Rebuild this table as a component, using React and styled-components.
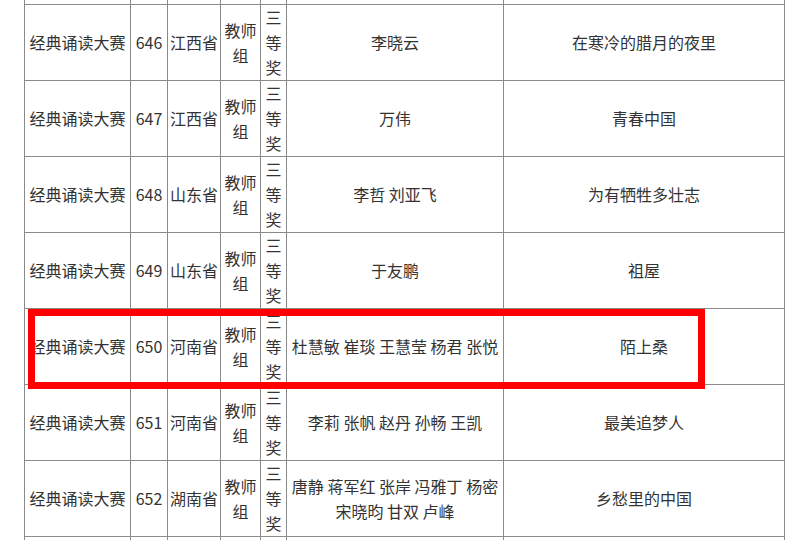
import React from 'react';
import styled, { createGlobalStyle } from 'styled-components';

const GlobalStyle = createGlobalStyle`
  html, body {
    margin: 0;
    padding: 0;
    overflow: hidden;
    background: #ffffff;
  }
`;

const Page = styled.div`
  position: relative;
  height: 540px;
  overflow: hidden;
  padding-left: 24px;
  font-family: "Noto Sans CJK SC", "Noto Sans", sans-serif;
  color: #333333;
`;

const Table = styled.table`
  table-layout: fixed;
  width: 760px;
  border-collapse: collapse;
  border-left: 1px solid #222222;
  border-right: 1px solid #222222;
`;

const Cell = styled.td`
  border: 1px solid #8a8a8a;
  padding: 0 ${p => p.$pad || 2}px;
  height: 75px;
  font-size: 16px;
  line-height: 25px;
  text-align: center;
  vertical-align: middle;
  word-break: break-all;
`;

const SpacerCell = styled.td`
  border-left: 1px solid #8a8a8a;
  border-right: 1px solid #8a8a8a;
  border-top: none;
  padding: 0;
  height: 4px;
  font-size: 0;
  line-height: 0;
`;

const Highlight = styled.div`
  position: absolute;
  left: 28px;
  top: 309px;
  width: 677px;
  height: 80px;
  box-sizing: border-box;
  border: 7px solid #ff0000;
  pointer-events: none;
`;

const widths = [106, 37, 53, 40, 26, 217, 281];

const rows = [
  { no: 646, prov: '江西省', names: '李晓云', title: '在寒冷的腊月的夜里' },
  { no: 647, prov: '江西省', names: '万伟', title: '青春中国' },
  { no: 648, prov: '山东省', names: '李哲 刘亚飞', title: '为有牺牲多壮志' },
  { no: 649, prov: '山东省', names: '于友鹏', title: '祖屋' },
  { no: 650, prov: '河南省', names: '杜慧敏 崔琰 王慧莹 杨君 张悦', title: '陌上桑' },
  { no: 651, prov: '河南省', names: '李莉 张帆 赵丹 孙畅 王凯', title: '最美追梦人' },
  { no: 652, prov: '湖南省', names: '唐静 蒋军红 张岸 冯雅丁 杨密 宋晓昀 甘双 卢峰', title: '乡愁里的中国' },
];

const App = () => (
  <>
    <GlobalStyle />
    <Page>
      <Table>
        <colgroup>
          {widths.map((w, i) => <col key={i} style={{ width: w }} />)}
        </colgroup>
        <tbody>
          <tr>
            {widths.map((_, i) => <SpacerCell key={i} />)}
          </tr>
          {rows.map(r => (
            <tr key={r.no}>
              <Cell>经典诵读大赛</Cell>
              <Cell $pad={1}>{r.no}</Cell>
              <Cell $pad={1}>{r.prov}</Cell>
              <Cell $pad={1}>教师组</Cell>
              <Cell $pad={1}>三等奖</Cell>
              <Cell>{r.names}</Cell>
              <Cell>{r.title}</Cell>
            </tr>
          ))}
          <tr>
            {widths.map((_, i) => <Cell key={i} />)}
          </tr>
        </tbody>
      </Table>
      <Highlight />
    </Page>
  </>
);

export default App;
